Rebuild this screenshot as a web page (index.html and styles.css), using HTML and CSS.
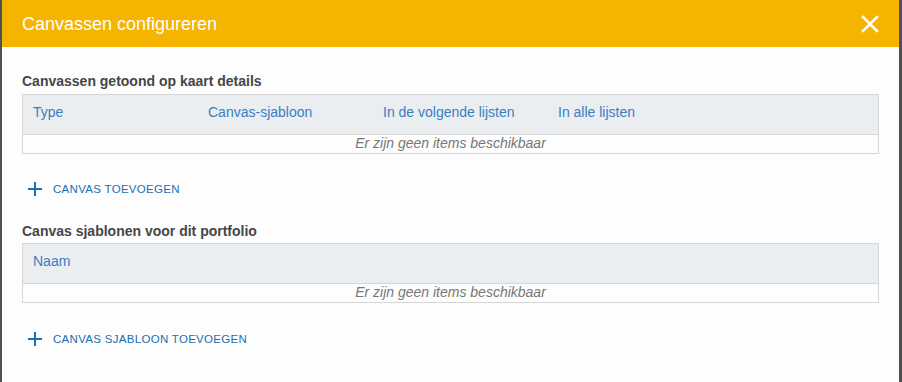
FILE: index.html
```html
<!DOCTYPE html>
<html lang="nl">
<head>
<meta charset="utf-8">
<link rel="stylesheet" href="styles.css">
</head>
<body>
<div class="dialog">
  <header class="dlg-header">
    <h1 class="dlg-title">Canvassen configureren</h1>
    <button class="close" aria-label="Sluiten">
      <svg width="18" height="18" viewBox="0 0 18 18"><path d="M2 2L16 16M16 2L2 16" stroke="#fff" stroke-width="2.6" stroke-linecap="square" fill="none"/></svg>
    </button>
  </header>
  <div class="dlg-body">
    <section class="section">
      <h2 class="sec-title">Canvassen getoond op kaart details</h2>
      <div class="grid">
        <div class="grid-head cols4">
          <span>Type</span><span>Canvas-sjabloon</span><span>In de volgende lijsten</span><span>In alle lijsten</span>
        </div>
        <div class="grid-empty">Er zijn geen items beschikbaar</div>
      </div>
      <button class="add add1">
        <svg width="16" height="16" viewBox="0 0 16 16"><path d="M8 1V15M1 8H15" stroke="#1a6faf" stroke-width="2" fill="none"/></svg>
        <span>CANVAS TOEVOEGEN</span>
      </button>
    </section>
    <section class="section">
      <h2 class="sec-title">Canvas sjablonen voor dit portfolio</h2>
      <div class="grid">
        <div class="grid-head cols4">
          <span>Naam</span>
        </div>
        <div class="grid-empty">Er zijn geen items beschikbaar</div>
      </div>
      <button class="add add2">
        <svg width="16" height="16" viewBox="0 0 16 16"><path d="M8 1V15M1 8H15" stroke="#1a6faf" stroke-width="2" fill="none"/></svg>
        <span>CANVAS SJABLOON TOEVOEGEN</span>
      </button>
    </section>
  </div>
</div>
</body>
</html>
```
FILE: styles.css
```css
html, body {
  margin: 0;
  padding: 0;
  height: 100%;
}
body {
  background: #505050;
  font-family: "Liberation Sans", Arial, sans-serif;
}
.dialog {
  margin: 0 3px 0 2px;
  height: 382px;
  background: #fdfdfd;
}
.dlg-header {
  height: 47px;
  background: #f5b400;
  display: flex;
  align-items: center;
  justify-content: space-between;
  padding: 0 20px 0 20px;
}
.dlg-title {
  margin: 0;
  font-size: 18px;
  font-weight: normal;
  color: #fff;
  padding-top: 1px;
}
.close {
  background: none;
  border: 0;
  padding: 0;
  width: 18px;
  height: 18px;
  display: flex;
}
.dlg-body {
  padding: 0 20px;
}
.section {
  display: flex;
  flex-direction: column;
}
.sec-title {
  margin: 0;
  font-size: 14px;
  font-weight: bold;
  color: #464646;
  line-height: 16px;
  height: 16px;
}
.section:first-child .sec-title {
  margin-top: 26px;
  margin-bottom: 5px;
}
.section + .section .sec-title {
  margin-top: 0;
  margin-bottom: 4px;
}
.grid {
  border: 1px solid #d6d6d6;
}
.grid-head {
  height: 39px;
  background: #eaeef1;
  border-bottom: 1px solid #d6d6d6;
  display: grid;
  grid-template-columns: repeat(4, 175px);
  align-items: center;
  font-size: 14px;
  color: #3b7dc0;
}
.grid-head span {
  padding-left: 10px;
  padding-bottom: 6px;
}
.grid-empty {
  height: 18px;
  line-height: 17px;
  text-align: center;
  font-size: 14px;
  font-style: italic;
  color: #777;
}
.add {
  display: flex;
  align-items: center;
  gap: 10px;
  background: none;
  border: 0;
  padding: 0 0 0 5px;
  font-family: inherit;
  font-size: 11.5px;
  color: #1a6faf;
  letter-spacing: 0.3px;
  height: 16px;
  cursor: pointer;
}
.add1 {
  margin-top: 27px;
  margin-bottom: 26px;
}
.add2 {
  margin-top: 28px;
}
```
